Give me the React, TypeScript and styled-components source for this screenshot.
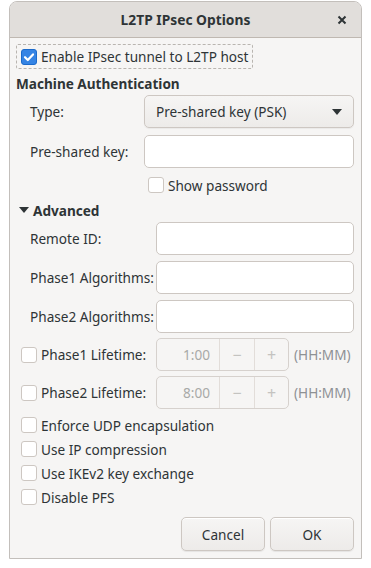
import React from 'react';
import styled, { createGlobalStyle } from 'styled-components';

const GlobalStyle = createGlobalStyle`
  html, body {
    margin: 0;
    padding: 0;
    background: #ffffff;
  }
  body {
    font-family: "Noto Sans", "Open Sans", sans-serif;
    font-size: 13.6px;
    color: #2e3436;
  }
`;

const Page = styled.div`
  width: 371px;
  height: 568px;
  padding: 1px 9px 0 9px;
  box-sizing: border-box;
`;

const Window = styled.div`
  width: 353px;
  height: 558px;
  box-sizing: border-box;
  border: 1px solid #c3bfbb;
  border-radius: 8px 8px 0 0;
  background: #f6f5f4;
  display: flex;
  flex-direction: column;
  overflow: hidden;
`;

const TitleBar = styled.div`
  height: 36px;
  flex: none;
  box-sizing: border-box;
  background: #e1dedb;
  border-bottom: 1px solid #bfb8b1;
  display: flex;
  align-items: center;
  justify-content: center;
  position: relative;
`;

const Title = styled.div`
  font-weight: 700;
  font-size: 13.8px;
  color: #2e3436;
`;

const CloseButton = styled.div`
  position: absolute;
  right: 12px;
  top: 11px;
  width: 14px;
  height: 14px;
  display: flex;
  align-items: center;
  justify-content: center;
`;

const Body = styled.div`
  flex: 1;
  display: flex;
  flex-direction: column;
  padding: 6px 7px 0 6px;
`;

const FocusRow = styled.div`
  align-self: flex-start;
  height: 25px;
  box-sizing: border-box;
  border: 1px dashed #b9b5b0;
  border-radius: 2px;
  padding: 0 4px;
  display: flex;
  align-items: center;
  gap: 4px;
`;

const Box = styled.span<{ $checked?: boolean }>`
  width: 16px;
  height: 16px;
  box-sizing: border-box;
  flex: none;
  border-radius: 3px;
  border: 1px solid ${({ $checked }) => ($checked ? '#1b6acb' : '#cdc7c2')};
  background: ${({ $checked }) => ($checked ? '#3584e4' : '#ffffff')};
  display: flex;
  align-items: center;
  justify-content: center;
`;

const Heading = styled.div<{ $top: number }>`
  font-weight: 700;
  margin-top: ${({ $top }) => $top}px;
  height: 22px;
  display: flex;
  align-items: center;
  gap: 4px;
`;

const Grid = styled.div<{ $col: number; $gap: number }>`
  display: grid;
  grid-template-columns: ${({ $col }) => `${$col}px 1fr`};
  row-gap: ${({ $gap }) => $gap}px;
  padding-left: 14px;
  margin-top: 1px;
`;

const Label = styled.div`
  display: flex;
  align-items: center;
  height: 33px;
  white-space: nowrap;
`;

const Entry = styled.div`
  height: 33px;
  box-sizing: border-box;
  background: #ffffff;
  border: 1px solid #cdc7c2;
  border-radius: 5px;
`;

const Combo = styled.div`
  height: 33px;
  box-sizing: border-box;
  background: linear-gradient(#f6f5f4, #edebe9);
  border: 1px solid #cdc7c2;
  border-radius: 5px;
  box-shadow: 0 1px 1px rgba(0, 0, 0, 0.05);
  display: flex;
  align-items: center;
  justify-content: space-between;
  padding: 0 11px 0 11px;
`;

const Check = styled.div<{ $indent?: number }>`
  display: flex;
  align-items: center;
  gap: 4px;
  height: 24px;
  padding-left: ${({ $indent }) => $indent ?? 0}px;
`;

const PasswordToggle = styled(Check)`
  margin-top: 5px;
`;

const Lifetimes = styled.div`
  display: flex;
  flex-direction: column;
  gap: 5px;
  margin-top: 5px;
`;

const LifetimeRow = styled.div`
  display: grid;
  grid-template-columns: 135px 133px 1fr;
  align-items: center;
  height: 33px;
  padding-left: 5px;
`;

const Spin = styled.div`
  height: 33px;
  box-sizing: border-box;
  border: 1px solid #d6d1cd;
  border-radius: 5px;
  display: grid;
  grid-template-columns: 1fr 35px 34px;
  color: #a8a9a7;
`;

const SpinValue = styled.div`
  display: flex;
  align-items: center;
  justify-content: flex-end;
  padding-right: 9px;
`;

const SpinButton = styled.div`
  display: flex;
  align-items: center;
  justify-content: center;
  border-left: 1px solid #e2ddd9;
  color: #c4c3c0;
  font-size: 16px;
`;

const Units = styled.div`
  color: #8e9194;
  padding-left: 5px;
  white-space: nowrap;
`;

const Options = styled.div`
  display: flex;
  flex-direction: column;
  padding-left: 5px;
  margin-top: 4px;
`;

const Actions = styled.div`
  display: flex;
  justify-content: flex-end;
  gap: 5px;
  margin-top: 8px;
`;

const Button = styled.div`
  width: 84px;
  height: 34px;
  box-sizing: border-box;
  border: 1px solid #cdc7c2;
  border-radius: 5px;
  background: linear-gradient(#f6f5f4, #edebe9);
  box-shadow: inset 0 1px #ffffff, 0 1px 1px rgba(0, 0, 0, 0.07);
  display: flex;
  align-items: center;
  justify-content: center;
`;

const Tick = () => (
  <svg width="12" height="12" viewBox="0 0 12 12">
    <path d="M2 6.2 L4.8 9 L10 3.4" fill="none" stroke="#fff" strokeWidth="2.2" strokeLinecap="round" strokeLinejoin="round" />
  </svg>
);

const Arrow = ({ style }: { style?: React.CSSProperties }) => (
  <svg width="10" height="6" viewBox="0 0 10 6" style={style}>
    <path d="M0 0 H10 L5 6 Z" fill="#2e3436" />
  </svg>
);

const CheckBox = ({ checked, label }: { checked?: boolean; label: string }) => (
  <>
    <Box $checked={checked}>{checked && <Tick />}</Box>
    <span>{label}</span>
  </>
);

const lifetimes = [
  { label: 'Phase1 Lifetime:', value: '1:00' },
  { label: 'Phase2 Lifetime:', value: '8:00' },
];

const options = ['Enforce UDP encapsulation', 'Use IP compression', 'Use IKEv2 key exchange', 'Disable PFS'];

export default function App() {
  return (
    <>
      <GlobalStyle />
      <Page>
        <Window>
          <TitleBar>
            <Title>L2TP IPsec Options</Title>
            <CloseButton>
              <svg width="10" height="10" viewBox="0 0 10 10">
                <path d="M1.5 1.5 L8.5 8.5 M8.5 1.5 L1.5 8.5" stroke="#2e3436" strokeWidth="2" />
              </svg>
            </CloseButton>
          </TitleBar>
          <Body>
            <FocusRow>
              <CheckBox checked label="Enable IPsec tunnel to L2TP host" />
            </FocusRow>
            <Heading $top={3}>Machine Authentication</Heading>
            <Grid $col={114} $gap={7}>
              <Label>Type:</Label>
              <Combo>
                <span>Pre-shared key (PSK)</span>
                <Arrow />
              </Combo>
              <Label>Pre-shared key:</Label>
              <Entry />
            </Grid>
            <PasswordToggle $indent={132}>
              <CheckBox label="Show password" />
            </PasswordToggle>
            <Heading $top={2}>
              <Arrow style={{ marginLeft: 3 }} />
              Advanced
            </Heading>
            <Grid $col={126} $gap={6}>
              <Label>Remote ID:</Label>
              <Entry />
              <Label>Phase1 Algorithms:</Label>
              <Entry />
              <Label>Phase2 Algorithms:</Label>
              <Entry />
            </Grid>
            <Lifetimes>
              {lifetimes.map((l) => (
                <LifetimeRow key={l.label}>
                  <Check>
                    <CheckBox label={l.label} />
                  </Check>
                  <Spin>
                    <SpinValue>{l.value}</SpinValue>
                    <SpinButton>−</SpinButton>
                    <SpinButton>+</SpinButton>
                  </Spin>
                  <Units>(HH:MM)</Units>
                </LifetimeRow>
              ))}
            </Lifetimes>
            <Options>
              {options.map((o) => (
                <Check key={o}>
                  <CheckBox label={o} />
                </Check>
              ))}
            </Options>
            <Actions>
              <Button>Cancel</Button>
              <Button>OK</Button>
            </Actions>
          </Body>
        </Window>
      </Page>
    </>
  );
}
